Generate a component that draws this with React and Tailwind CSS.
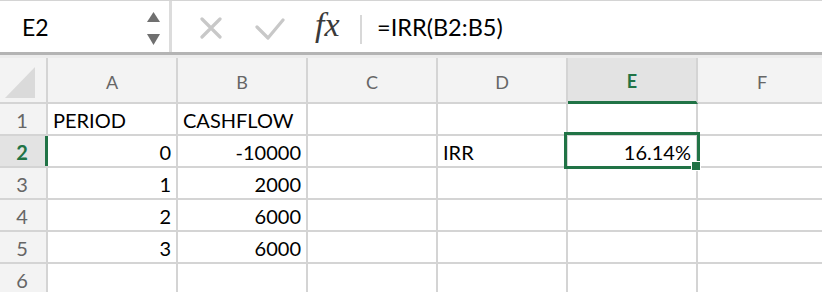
import React from "react";

const cols = ["A", "B", "C", "D", "E", "F"];

const rows = [
  { n: 1, cells: [{ v: "PERIOD" }, { v: "CASHFLOW" }, {}, {}, {}, {}] },
  {
    n: 2,
    cells: [
      { v: "0", r: true },
      { v: "-10000", r: true },
      {},
      { v: "IRR" },
      { v: "16.14%", r: true, sel: true },
      {},
    ],
  },
  { n: 3, cells: [{ v: "1", r: true }, { v: "2000", r: true }, {}, {}, {}, {}] },
  { n: 4, cells: [{ v: "2", r: true }, { v: "6000", r: true }, {}, {}, {}, {}] },
  { n: 5, cells: [{ v: "3", r: true }, { v: "6000", r: true }, {}, {}, {}, {}] },
  { n: 6, cells: [{}, {}, {}, {}, {}, {}] },
];

const Toolbar = () => (
  <div>
    <div className="flex h-[52px] border-t border-[#d4d4d4] bg-white">
      <div className="relative flex w-[169px] items-center pl-[22px] text-[23px] text-black">
        <span className="mt-[2px]">E2</span>
        <svg className="absolute left-[146px] top-[11px]" width="15" height="34" viewBox="0 0 15 34">
          <polygon points="7.5,0 14,10 1,10" fill="#707070" />
          <polygon points="1,22 14,22 7.5,33" fill="#707070" />
        </svg>
      </div>
      <div className="w-[3px] bg-[#dcdcdc]" />
      <div className="relative flex flex-1 items-center">
        <svg className="absolute left-[28px] top-[16px]" width="22" height="22" viewBox="0 0 22 22">
          <path d="M2 2 L20 20 M20 2 L2 20" stroke="#c8c8c8" strokeWidth="3.2" strokeLinecap="round" />
        </svg>
        <svg className="absolute left-[83px] top-[16px]" width="30" height="24" viewBox="0 0 30 24">
          <path d="M2 10 L13 21 L28 3" stroke="#c8c8c8" strokeWidth="3.2" fill="none" strokeLinecap="round" strokeLinejoin="round" />
        </svg>
        <span className="absolute left-[143px] top-[4px] font-['Liberation_Serif',serif] text-[34px] italic leading-[40px] text-[#3a3a3a]">
          fx
        </span>
        <div className="absolute left-[188px] top-[14px] h-[29px] w-[2px] bg-[#d8d8d8]" />
        <span className="ml-[205px] mt-[2px] text-[23.5px] text-black">=IRR(B2:B5)</span>
      </div>
    </div>
    <div className="h-[3px] bg-[#b4b4b4]" />
    <div className="h-[3px] bg-[#ececec]" />
  </div>
);

const Sheet = () => (
  <div className="grid grid-cols-[48px_130px_130px_130px_130px_130px_130px] grid-rows-[46px_repeat(6,32px)]">
    <div className="flex items-end justify-center border-b-2 border-r-2 border-[#d4d4d4] bg-[#f3f3f3] pb-[4px]">
      <svg width="30" height="31" viewBox="0 0 30 31" className="ml-[-6px]">
        <polygon points="30,0 30,31 0,31" fill="#dadada" />
      </svg>
    </div>
    {cols.map((c) =>
      c === "E" ? (
        <div
          key={c}
          className="flex items-center justify-center border-b-[3px] border-r-2 border-b-[#217346] border-r-[#d4d4d4] bg-[#e3e3e3] pt-[4px] text-[18px] font-bold text-[#217346]"
        >
          {c}
        </div>
      ) : (
        <div
          key={c}
          className="flex items-center justify-center border-b-2 border-r-2 border-[#d4d4d4] bg-[#f3f3f3] pt-[5px] text-[18px] text-[#666666]"
        >
          {c}
        </div>
      )
    )}
    {rows.map((row) => (
      <React.Fragment key={row.n}>
        {row.n === 2 ? (
          <div className="relative flex items-center justify-center border-b-2 border-r-2 border-[#d4d4d4] bg-[#e3e3e3] pr-[2px] pt-[2px] text-[20px] font-bold text-[#217346]">
            {row.n}
            <div className="absolute right-[-2px] top-0 h-full w-[3px] bg-[#217346]" />
          </div>
        ) : (
          <div className="flex items-center justify-center border-b-2 border-r-2 border-[#d4d4d4] bg-[#f3f3f3] pr-[2px] pt-[2px] text-[20px] text-[#666666]">
            {row.n}
          </div>
        )}
        {row.cells.map((cell, i) => (
          <div
            key={i}
            className={`relative flex items-center border-b-2 border-r-2 border-[#d4d4d4] bg-white px-[5px] pt-[2px] text-[20px] text-black ${
              cell.r ? "justify-end" : "justify-start"
            }`}
          >
            {cell.sel && (
              <>
                <div className="absolute left-[-4px] top-[-4px] z-10 h-[37px] w-[136px] border-[3px] border-[#217346]" />
                <div className="absolute left-[123px] top-[25px] z-20 h-[10px] w-[10px] border border-white bg-[#217346]" />
              </>
            )}
            <span className="relative z-0">{cell.v}</span>
          </div>
        ))}
      </React.Fragment>
    ))}
  </div>
);

export default function App() {
  return (
    <div className="h-[292px] w-[822px] overflow-hidden bg-white font-['Lato',sans-serif]">
      <Toolbar />
      <Sheet />
    </div>
  );
}
